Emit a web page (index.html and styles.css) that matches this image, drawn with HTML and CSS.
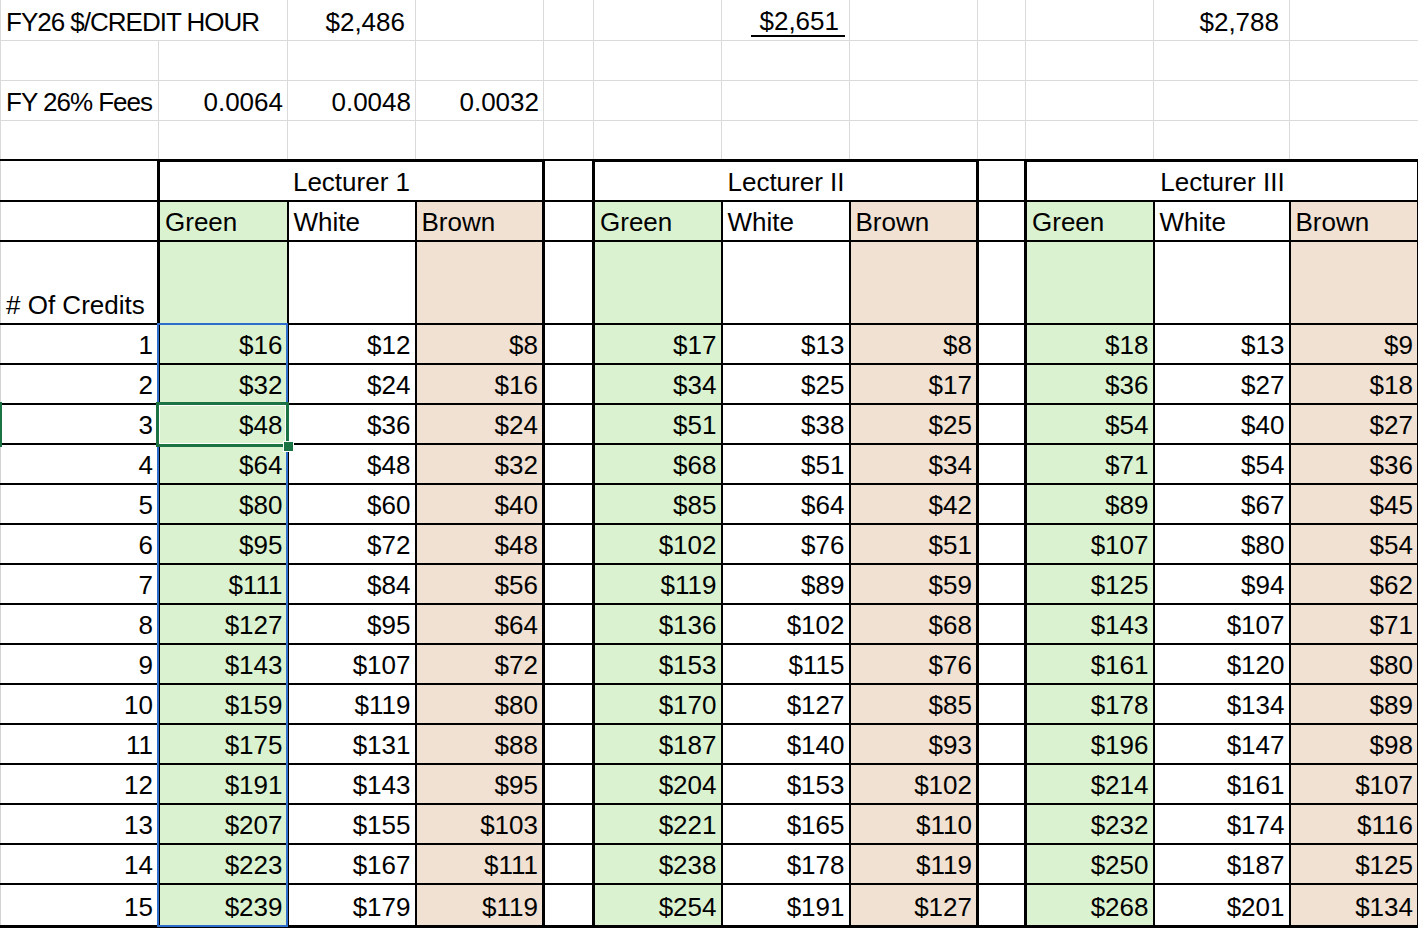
FILE: index.html
```html
<!DOCTYPE html>
<html>
<head>
<meta charset="utf-8">
<title>FY26 Fees</title>
<link rel="stylesheet" href="styles.css">
</head>
<body>
<div class="sheet">
<table>
<colgroup>
<col class="c158"><col class="c129"><col class="c128"><col class="c128"><col class="c50"><col class="c128"><col class="c128"><col class="c128"><col class="c48"><col class="c128"><col class="c136"><col class="c129">
</colgroup>
<tbody>
<tr class="top first"><td class="lab1">FY26 $/CREDIT HOUR</td><td class="ov"></td><td class="n acc">$2,486</td><td></td><td></td><td></td><td class="n und"><span class="ul">$2,651</span></td><td></td><td></td><td></td><td class="n acc">$2,788</td><td></td></tr>
<tr class="top"><td></td><td></td><td></td><td></td><td></td><td></td><td></td><td></td><td></td><td></td><td></td><td></td></tr>
<tr class="top"><td class="lab2">FY 26% Fees</td><td class="n">0.0064</td><td class="n">0.0048</td><td class="n">0.0032</td><td></td><td></td><td></td><td></td><td></td><td></td><td></td><td></td></tr>
<tr class="top"><td></td><td></td><td></td><td></td><td></td><td></td><td></td><td></td><td></td><td></td><td></td><td></td></tr>

<tr class="t hd"><td class="a"></td><td colspan="3" class="blk lb rb ctr">Lecturer 1</td><td></td><td colspan="3" class="blk lb rb ctr">Lecturer II</td><td></td><td colspan="3" class="blk lb rb ctr">Lecturer III</td></tr>
<tr class="t r40"><td class="a"></td><td class="g lb">Green</td><td>White</td><td class="br rb">Brown</td><td></td><td class="g lb">Green</td><td>White</td><td class="br rb">Brown</td><td></td><td class="g lb">Green</td><td>White</td><td class="br rb">Brown</td></tr>
<tr class="t tall"><td class="a">#&nbsp;Of Credits</td><td class="g lb"></td><td></td><td class="br rb"></td><td></td><td class="g lb"></td><td></td><td class="br rb"></td><td></td><td class="g lb"></td><td></td><td class="br rb"></td></tr>

<tr class="t r40"><td class="a n">1</td><td class="n g lb">$16</td><td class="n">$12</td><td class="n br rb">$8</td><td></td><td class="n g lb">$17</td><td class="n">$13</td><td class="n br rb">$8</td><td></td><td class="n g lb">$18</td><td class="n">$13</td><td class="n br rb">$9</td></tr>
<tr class="t r40"><td class="a n">2</td><td class="n g lb">$32</td><td class="n">$24</td><td class="n br rb">$16</td><td></td><td class="n g lb">$34</td><td class="n">$25</td><td class="n br rb">$17</td><td></td><td class="n g lb">$36</td><td class="n">$27</td><td class="n br rb">$18</td></tr>
<tr class="t r40"><td class="a n">3</td><td class="n g lb">$48</td><td class="n">$36</td><td class="n br rb">$24</td><td></td><td class="n g lb">$51</td><td class="n">$38</td><td class="n br rb">$25</td><td></td><td class="n g lb">$54</td><td class="n">$40</td><td class="n br rb">$27</td></tr>
<tr class="t r40"><td class="a n">4</td><td class="n g lb">$64</td><td class="n">$48</td><td class="n br rb">$32</td><td></td><td class="n g lb">$68</td><td class="n">$51</td><td class="n br rb">$34</td><td></td><td class="n g lb">$71</td><td class="n">$54</td><td class="n br rb">$36</td></tr>
<tr class="t r40"><td class="a n">5</td><td class="n g lb">$80</td><td class="n">$60</td><td class="n br rb">$40</td><td></td><td class="n g lb">$85</td><td class="n">$64</td><td class="n br rb">$42</td><td></td><td class="n g lb">$89</td><td class="n">$67</td><td class="n br rb">$45</td></tr>
<tr class="t r40"><td class="a n">6</td><td class="n g lb">$95</td><td class="n">$72</td><td class="n br rb">$48</td><td></td><td class="n g lb">$102</td><td class="n">$76</td><td class="n br rb">$51</td><td></td><td class="n g lb">$107</td><td class="n">$80</td><td class="n br rb">$54</td></tr>
<tr class="t r40"><td class="a n">7</td><td class="n g lb">$111</td><td class="n">$84</td><td class="n br rb">$56</td><td></td><td class="n g lb">$119</td><td class="n">$89</td><td class="n br rb">$59</td><td></td><td class="n g lb">$125</td><td class="n">$94</td><td class="n br rb">$62</td></tr>
<tr class="t r40"><td class="a n">8</td><td class="n g lb">$127</td><td class="n">$95</td><td class="n br rb">$64</td><td></td><td class="n g lb">$136</td><td class="n">$102</td><td class="n br rb">$68</td><td></td><td class="n g lb">$143</td><td class="n">$107</td><td class="n br rb">$71</td></tr>
<tr class="t r40"><td class="a n">9</td><td class="n g lb">$143</td><td class="n">$107</td><td class="n br rb">$72</td><td></td><td class="n g lb">$153</td><td class="n">$115</td><td class="n br rb">$76</td><td></td><td class="n g lb">$161</td><td class="n">$120</td><td class="n br rb">$80</td></tr>
<tr class="t r40"><td class="a n">10</td><td class="n g lb">$159</td><td class="n">$119</td><td class="n br rb">$80</td><td></td><td class="n g lb">$170</td><td class="n">$127</td><td class="n br rb">$85</td><td></td><td class="n g lb">$178</td><td class="n">$134</td><td class="n br rb">$89</td></tr>
<tr class="t r40"><td class="a n">11</td><td class="n g lb">$175</td><td class="n">$131</td><td class="n br rb">$88</td><td></td><td class="n g lb">$187</td><td class="n">$140</td><td class="n br rb">$93</td><td></td><td class="n g lb">$196</td><td class="n">$147</td><td class="n br rb">$98</td></tr>
<tr class="t r40"><td class="a n">12</td><td class="n g lb">$191</td><td class="n">$143</td><td class="n br rb">$95</td><td></td><td class="n g lb">$204</td><td class="n">$153</td><td class="n br rb">$102</td><td></td><td class="n g lb">$214</td><td class="n">$161</td><td class="n br rb">$107</td></tr>
<tr class="t r40"><td class="a n">13</td><td class="n g lb">$207</td><td class="n">$155</td><td class="n br rb">$103</td><td></td><td class="n g lb">$221</td><td class="n">$165</td><td class="n br rb">$110</td><td></td><td class="n g lb">$232</td><td class="n">$174</td><td class="n br rb">$116</td></tr>
<tr class="t r40"><td class="a n">14</td><td class="n g lb">$223</td><td class="n">$167</td><td class="n br rb">$111</td><td></td><td class="n g lb">$238</td><td class="n">$178</td><td class="n br rb">$119</td><td></td><td class="n g lb">$250</td><td class="n">$187</td><td class="n br rb">$125</td></tr>
<tr class="t r42 last"><td class="a n">15</td><td class="n g lb">$239</td><td class="n">$179</td><td class="n br rb">$119</td><td></td><td class="n g lb">$254</td><td class="n">$191</td><td class="n br rb">$127</td><td></td><td class="n g lb">$268</td><td class="n">$201</td><td class="n br rb">$134</td></tr>
</tbody>
</table>
<div class="range"></div>
<div class="active"><span class="handle"></span></div>
<div class="rowmark"></div>
</div>
</body>
</html>
```
FILE: styles.css
```css
* { box-sizing: border-box; }
html, body { margin: 0; padding: 0; background: #ffffff; }
body { font-family: "Liberation Sans", Arial, sans-serif; color: #000; }

.sheet { position: relative; width: 1418px; height: 928px; overflow: hidden; }

table { border-collapse: collapse; table-layout: fixed; width: 1418px; }
.c158 { width: 158px; }
.c129 { width: 129px; }
.c128 { width: 128px; }
.c136 { width: 136px; }
.c50 { width: 50px; }
.c48 { width: 48px; }

td {
  padding: 0 4px 3px 5px;
  font-size: 26px;
  line-height: 29px;
  vertical-align: bottom;
  white-space: nowrap;
  overflow: visible;
  text-align: left;
}
td.n { text-align: right; }
td.ctr { text-align: center; }
td.acc { padding-right: 10px; }
td.und { padding-right: 4px; }

/* plain gridline area */
.top { height: 40px; }
.top td { border: 1px solid #dadada; }
.top.first td { border-top: none; }
.top td.lab1 { letter-spacing: -1px; font-size: 26px; border-right-style: hidden; }
.top td.ov { border-left-style: hidden; }
.lab2 { letter-spacing: -1px; }
.ul { display: inline-block; padding: 0 6px 0 8px; line-height: 27px; border-bottom: 2px solid #000; }

/* bordered table area */
.hd { height: 41px; }
.r40 { height: 40px; }
.r42 { height: 42px; }
.tall { height: 83px; }
.t td { border: 2px solid #000; }
.t td.a { border-left: 1px solid #d4d4d4; }
.t td.lb { border-left: 3px solid #000; }
.t td.rb { border-right: 3px solid #000; }
.t.hd td.blk { border-top: 3px solid #000; }
.t.last td { border-bottom: 3px solid #000; }

td.g { background: #daf2d0; }
td.br { background: #f0e1d3; }

/* selection overlays */
.range {
  position: absolute;
  left: 157px; top: 323px;
  width: 131px; height: 604px;
  border: 2px solid #2f6dcc;
}
.active {
  position: absolute;
  left: 156px; top: 402px;
  width: 133px; height: 45px;
  border: 3px solid #1b7343;
  box-shadow: inset 0 0 0 1px #ffffff;
}
.handle {
  position: absolute;
  right: -8px; bottom: -8px;
  width: 11px; height: 11px;
  background: #1b7343;
  border: 1.5px solid #ffffff;
}
.rowmark {
  position: absolute;
  left: 0; top: 402px;
  width: 2px; height: 45px;
  background: #1b7343;
}
```
